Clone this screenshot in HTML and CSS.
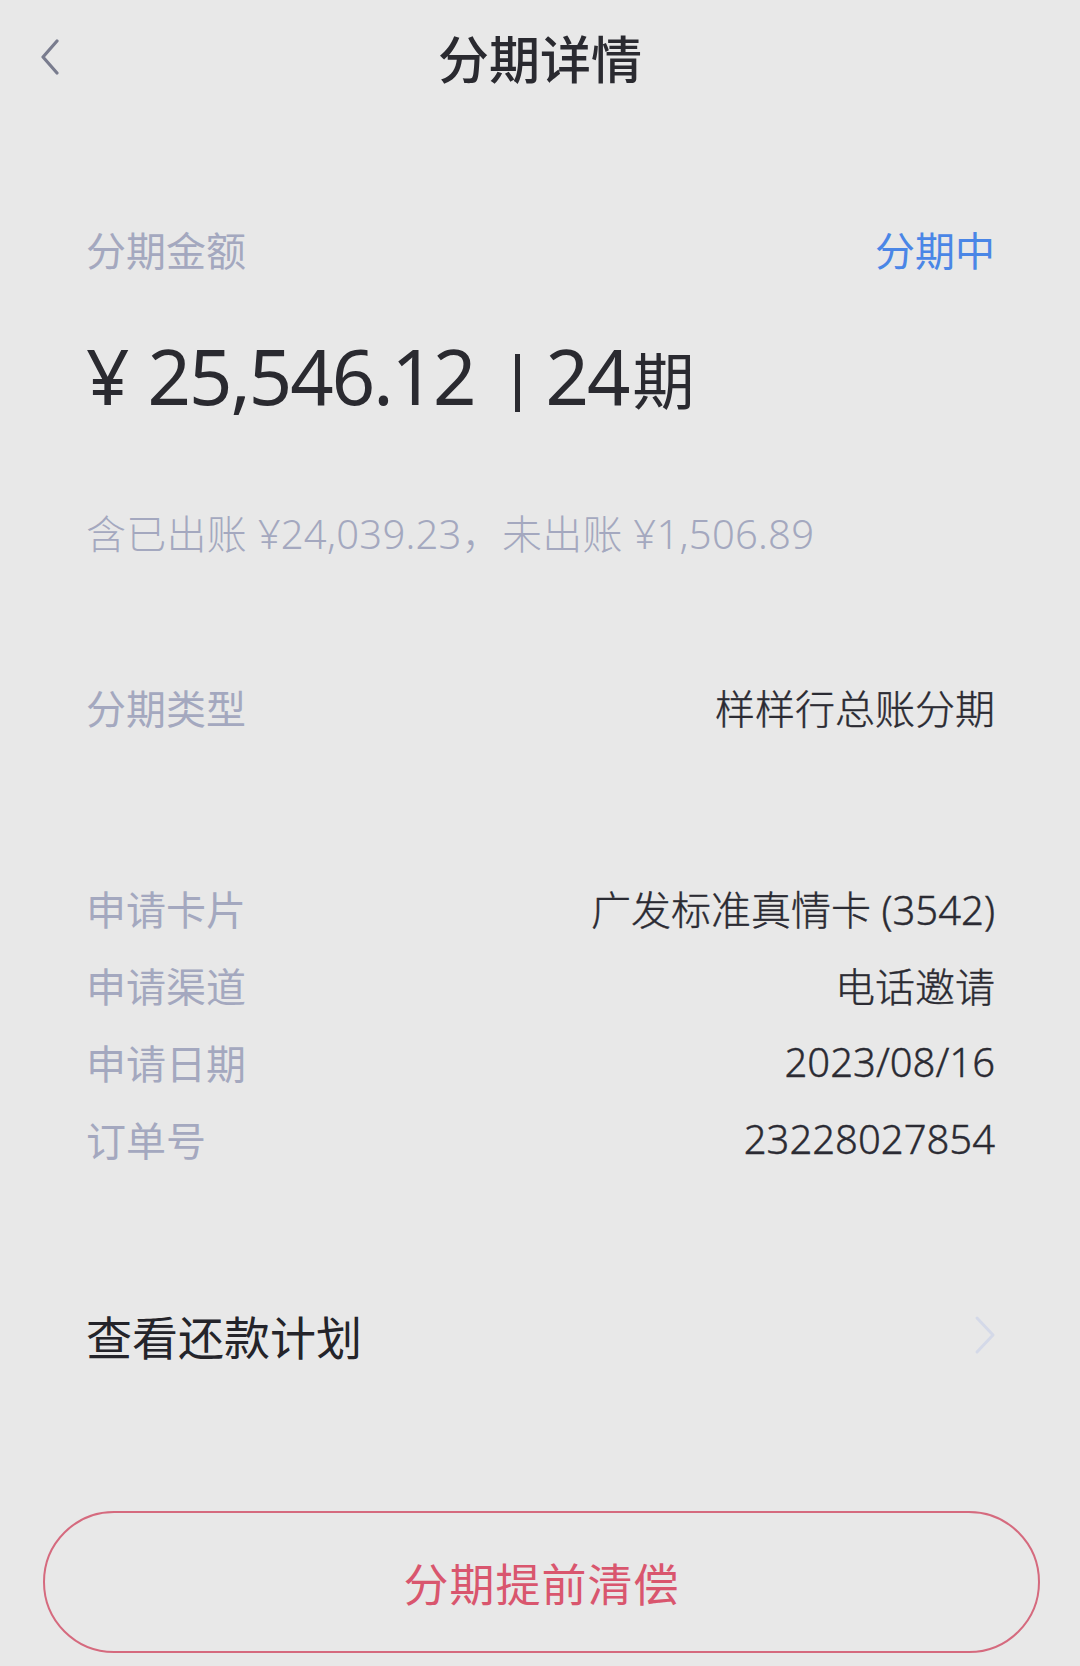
FILE: index.html
```html
<!DOCTYPE html>
<html lang="zh-CN">
<head>
<meta charset="utf-8">
<title>分期详情</title>
<link rel="stylesheet" href="styles.css">
</head>
<body>
<div class="page">
  <header class="topbar">
    <span class="back">
      <svg width="22" height="36" viewBox="0 0 22 36"><path d="M18 2 L4 18 L18 34" fill="none" stroke="#797c8e" stroke-width="3.2" stroke-linecap="round" stroke-linejoin="round"/></svg>
    </span>
    <h1 class="title">分期详情</h1>
  </header>

  <main class="content">
    <div class="row head-row">
      <span class="label">分期金额</span>
      <span class="status">分期中</span>
    </div>
    <div class="amount"><span class="yen">¥</span><span class="num">25,546.12</span><span class="sep"></span><span class="num">24</span><span class="unit">期</span></div>
    <div class="sub">含已出账 ¥24,039.23，未出账 ¥1,506.89</div>

    <div class="row type-row">
      <span class="label">分期类型</span>
      <span class="value">样样行总账分期</span>
    </div>

    <div class="details">
      <div class="row detail"><span class="label">申请卡片</span><span class="value">广发标准真情卡 (3542)</span></div>
      <div class="row detail"><span class="label">申请渠道</span><span class="value">电话邀请</span></div>
      <div class="row detail"><span class="label">申请日期</span><span class="value">2023/08/16</span></div>
      <div class="row detail"><span class="label">订单号</span><span class="value">23228027854</span></div>
    </div>

    <div class="row plan">
      <span class="plan-text">查看还款计划</span>
      <svg class="chev" width="22" height="40" viewBox="0 0 22 40"><path d="M3 3 L19 20 L3 37" fill="none" stroke="#d4d9e8" stroke-width="3" stroke-linecap="round" stroke-linejoin="round"/></svg>
    </div>
  </main>

  <div class="btn-wrap">
    <button class="btn">分期提前清偿</button>
  </div>
</div>
</body>
</html>
```

FILE: styles.css
```css
* { box-sizing: border-box; }
html, body {
  margin: 0;
  padding: 0;
  background: #e8e8e8;
}
body {
  font-family: "Noto Sans", "Noto Sans CJK SC", sans-serif;
  color: #2b2b33;
}
.page {
  width: 1080px;
  height: 1666px;
  overflow: hidden;
}
.topbar {
  height: 114px;
  display: flex;
  align-items: center;
  justify-content: center;
  position: relative;
}
.back {
  position: absolute;
  left: 39px;
  top: 39px;
  width: 22px;
  height: 36px;
  display: flex;
}
.title {
  margin: 0;
  font-family: "Noto Sans CJK SC", sans-serif;
  font-size: 51px;
  font-weight: 500;
  color: #2a2a30;
  line-height: 114px;
}
.content {
  padding: 0 85px 0 86px;
}
.row {
  display: flex;
  justify-content: space-between;
  align-items: center;
}
.label {
  color: #a4a8bf;
  font-size: 40px;
  font-family: "Noto Sans CJK SC", sans-serif;
}
.value {
  color: #2b2b33;
  font-size: 40px;
  font-weight: 300;
  -webkit-text-stroke: 0.4px #2b2b33;
}
.card-cjk {
  letter-spacing: 1px;
}
.head-row {
  margin-top: 107px;
  height: 56px;
}
.status {
  color: #4a86e6;
  font-size: 40px;
  font-family: "Noto Sans CJK SC", sans-serif;
}
.amount {
  margin-top: 49px;
  height: 100px;
  line-height: 100px;
  font-size: 76px;
  color: #2a2a30;
  white-space: nowrap;
}
.num {
  letter-spacing: -2px;
}
.yen {
  margin-right: 18px;
}
.sep {
  display: inline-block;
  width: 5px;
  height: 58px;
  vertical-align: -7px;
  background: #2a2a30;
  margin: 0 26px 0 40px;
}
.unit {
  font-family: "Noto Sans CJK SC", sans-serif;
  font-size: 62px;
  margin-left: 4px;
}
.sub {
  margin-top: 80px;
  height: 56px;
  line-height: 56px;
  color: #a4a8bf;
  font-size: 40px;
  font-weight: 300;
  letter-spacing: 0.25px;
  white-space: nowrap;
}
.type-row {
  margin-top: 117px;
  height: 56px;
}
.details {
  margin-top: 134px;
}
.detail {
  height: 77px;
}
.plan {
  margin-top: 128px;
  height: 60px;
}
.plan-text {
  font-family: "Noto Sans CJK SC", sans-serif;
  font-size: 46px;
  color: #24242a;
}
.chev {
  margin-right: -1px;
}
.btn-wrap {
  padding: 0 40px 0 43px;
  margin-top: 146px;
}
.btn {
  width: 100%;
  height: 142px;
  border: 2px solid #d56a7e;
  border-radius: 71px;
  background: transparent;
  color: #d9566e;
  font-family: "Noto Sans CJK SC", sans-serif;
  font-size: 45px;
  letter-spacing: 1px;
}
```
